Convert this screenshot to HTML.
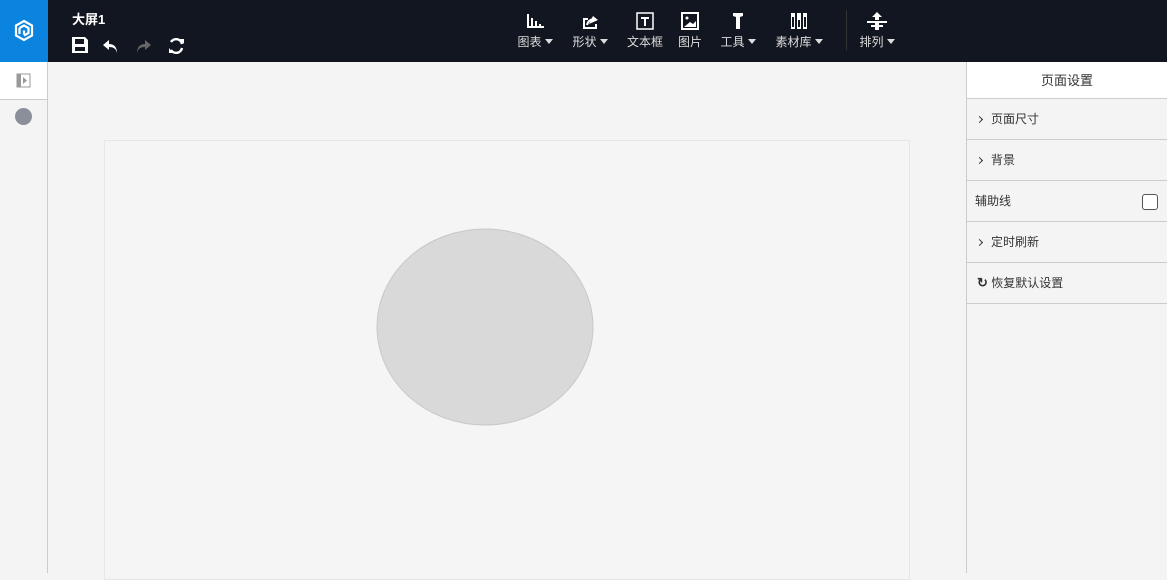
<!DOCTYPE html><html><head><meta charset="utf-8"><style>
*{margin:0;padding:0;box-sizing:border-box}
body{width:1167px;height:573px;overflow:hidden;background:#f4f4f4;font-family:"Liberation Sans","Noto Sans CJK SC",sans-serif;position:relative}
.top{position:absolute;left:0;top:0;width:1167px;height:62px;background:#121620}
.logo{position:absolute;left:0;top:0;width:48px;height:62px;background:#0a84de}
.title{position:absolute;left:72px;top:9px;color:#fff;font-size:13px;font-weight:bold}
.tb{position:absolute;top:0;text-align:center;color:#ddd;font-size:12px}
.tb svg{display:block;margin:12px auto 3px}
.caret{display:inline-block;border-left:4px solid transparent;border-right:4px solid transparent;border-top:5px solid #ddd;margin-left:3px;vertical-align:2px}
.left{position:absolute;left:0;top:62px;width:48px;height:511px;background:#f4f4f4;border-right:1px solid #ccc}
.page{position:absolute;left:104px;top:140px;width:806px;height:440px;background:#f5f5f5;border:1px solid #e6e6e6}
.right{position:absolute;left:966px;top:62px;width:201px;height:511px;background:#f4f4f4;border-left:1px solid #ccc}
.rh{height:37px;background:#fff;border-bottom:1px solid #ccc;text-align:center;line-height:37px;font-size:13px;color:#333}
.row{height:41px;border-bottom:1px solid #ccc;line-height:40px;font-size:12px;color:#333;padding-left:10px;position:relative}
.chev{display:inline-block;width:5px;height:5px;border-right:1.5px solid #333;border-top:1.5px solid #333;transform:rotate(45deg);margin-right:9px;vertical-align:1px}
</style></head><body>
<div class="top">
<div class="logo"><svg width="48" height="62"><g fill="none" stroke="#fff" stroke-width="2.2"><path d="M24 21l8 4.5v10L24 40l-8-4.5v-10z"/><path d="M19.5 28l4.5-2.5 4.5 2.5v5l-4.5 2.5M24 30.5v4"/><path d="M19.5 28v6"/></g></svg></div>
<div class="title">大屏1</div>
<svg style="position:absolute;left:71px;top:36px" width="120" height="18">
<g fill="#fff"><path d="M1 1h13l3 3v13H1zM4 3v5h9V3zM4 11v4h10v-4z"/><path d="M11 4h1.5v3H11z" fill="#121620"/></g>
<path d="M38 4l-6 5 6 5v-3c5 0 7 2 8 6 0-6-3-9-8-9z" fill="#fff"/>
<path d="M74 4l6 5-6 5v-3c-5 0-7 2-8 6 0-6 3-9 8-9z" fill="#666"/>
<g fill="none" stroke="#fff" stroke-width="2.4"><path d="M100 6a6 6 0 0 1 11 2M111 12a6 6 0 0 1-11 2"/></g><path d="M109 3l4 0 0 5zM102 17l-4 0 0-5z" fill="#fff"/>
</svg>
<div class="tb" style="left:514px;width:42px"><svg width="18" height="18"><g fill="#fff"><rect x="1" y="2" width="2" height="14"/><rect x="5" y="6" width="2" height="10"/><rect x="9" y="9" width="2" height="7"/><rect x="13" y="12" width="2" height="4"/><rect x="1" y="14" width="17" height="2"/></g></svg>图表<span class="caret"></span></div>
<div class="tb" style="left:569px;width:42px"><svg width="18" height="18"><path d="M2 6h5v2H4v7h10v-3h2v5H2z" fill="#fff"/><path d="M8 12l4-8 5 4z" fill="#fff"/><path d="M6 13c1-4 4-6 8-6" stroke="#fff" stroke-width="2" fill="none"/></svg>形状<span class="caret"></span></div>
<div class="tb" style="left:625px;width:40px"><svg width="20" height="18"><rect x="2" y="1" width="16" height="16" fill="none" stroke="#fff" stroke-width="1.5"/><path d="M6 5h8v2h-3v7H9V7H6z" fill="#fff"/></svg>文本框</div>
<div class="tb" style="left:676px;width:28px"><svg width="18" height="18"><rect x="1" y="1" width="16" height="16" fill="none" stroke="#fff" stroke-width="2"/><path d="M3 15l6-5 3 2 3-3v6z" fill="#fff"/><circle cx="6" cy="6" r="1.5" fill="#fff"/></svg>图片</div>
<div class="tb" style="left:718px;width:40px"><svg width="18" height="18"><path d="M4 1h10v3l-3 1v12H7V5L4 4z" fill="#fff"/></svg>工具<span class="caret"></span></div>
<div class="tb" style="left:773px;width:52px"><svg width="20" height="18"><g fill="#fff"><rect x="2" y="1" width="4" height="16"/><rect x="8" y="1" width="4" height="16"/><rect x="14" y="1" width="4" height="16"/></g><g fill="#121620"><rect x="3" y="5" width="2" height="10"/><rect x="9" y="8" width="2" height="7"/><rect x="15" y="5" width="2" height="10"/></g></svg>素材库<span class="caret"></span></div>
<div style="position:absolute;left:846px;top:10px;width:1px;height:40px;background:#333"></div>
<div class="tb" style="left:857px;width:40px"><svg width="22" height="18"><g fill="#fff"><path d="M11 0l5 5h-3v3H9V5H6z"/><rect x="1" y="9" width="20" height="2"/><rect x="5" y="13" width="12" height="2"/><rect x="9" y="9" width="4" height="9"/></g></svg>排列<span class="caret"></span></div>
</div>
<div class="left">
<div style="height:38px;background:#fff;border-bottom:1px solid #ccc;position:relative"><svg style="position:absolute;left:16px;top:11px" width="16" height="16"><rect x="1" y="1" width="13" height="13" fill="none" stroke="#999"/><rect x="1" y="1" width="4" height="13" fill="#999"/><path d="M7 4l4 3.5-4 3.5z" fill="#999"/></svg></div>
<div style="position:absolute;left:15px;top:46px;width:17px;height:17px;border-radius:50%;background:#8a8f99"></div>
</div>
<div class="page"></div>
<svg style="position:absolute;left:376px;top:228px" width="220" height="200"><ellipse cx="109" cy="99" rx="108" ry="98" fill="#d9d9d9" stroke="#c8c8c8"/></svg>
<div class="right">
<div class="rh">页面设置</div>
<div class="row"><span class="chev"></span>页面尺寸</div>
<div class="row"><span class="chev"></span>背景</div>
<div class="row" style="padding-left:8px">辅助线<span style="position:absolute;right:9px;top:13px;width:16px;height:16px;border:1px solid #555;border-radius:3px;background:#fff"></span></div>
<div class="row"><span class="chev"></span>定时刷新</div>
<div class="row"><b style="font-size:13px">↻</b> 恢复默认设置</div>
</div>
</body></html>
